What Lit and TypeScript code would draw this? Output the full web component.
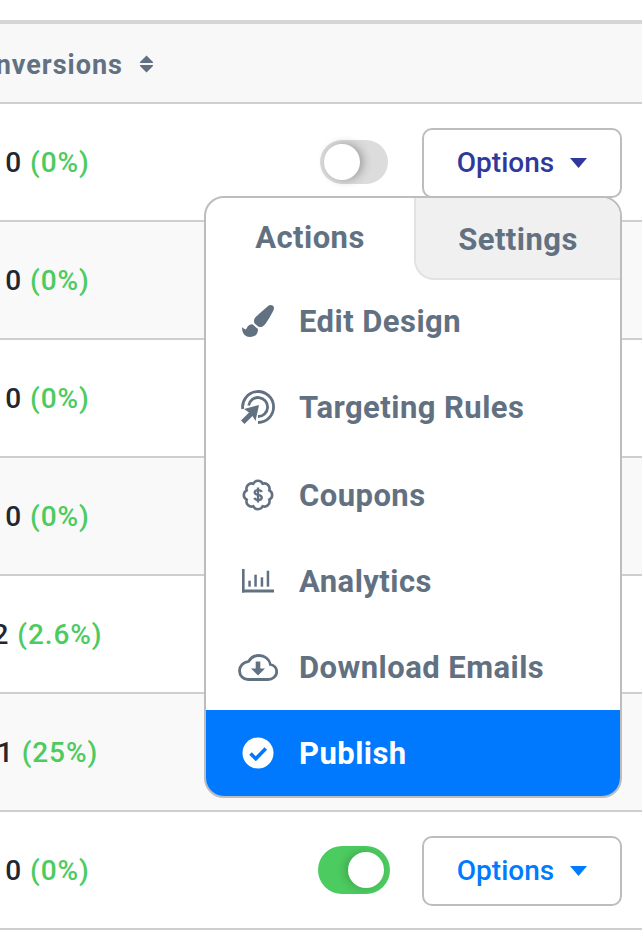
import { LitElement, html, css, svg } from 'lit';
import { customElement, state } from 'lit/decorators.js';

// scalloped outline for the coupon badge, 8 lobes round the middle of a 32 box
const scallop = () => {
  const pts: string[] = [];
  for (let i = 0; i < 8; i++) {
    const a = ((i * 45 + 22.5) * Math.PI) / 180;
    const x = (16 + 12.2 * Math.cos(a)).toFixed(2);
    const y = (16 + 12.2 * Math.sin(a)).toFixed(2);
    pts.push(i === 0 ? `M${x} ${y}` : `A5.2 5.2 0 0 1 ${x} ${y}`);
  }
  return `${pts.join('')}A5.2 5.2 0 0 1 ${pts[0].slice(1)}Z`;
};

const brush = svg`<path d="M167.02 309.34c-40.12 2.58-76.53 17.86-97.19 72.3-2.35 6.21-8 9.98-14.59 9.98-11.11 0-45.46-27.67-55.25-34.35C0 439.62 37.93 512 128 512c75.86 0 128-43.77 128-120.19 0-3.11-.65-6.08-.97-9.13l-88.01-73.34zM457.89 0c-15.16 0-29.37 6.71-40.21 16.45C213.27 199.05 192 203.34 192 257.09c0 13.7 3.25 26.76 8.73 38.7l63.82 53.18c7.21 1.8 14.64 3.03 22.39 3.03 62.11 0 98.11-45.47 211.16-256.46 7.38-14.35 13.9-29.85 13.9-45.99C512 20.64 486 0 457.89 0z" fill="currentColor"/>`;

const target = svg`
  <g fill="none" stroke="currentColor" stroke-width="2.800">
    <path d="M1.700 19A15.500 15.500 0 1 1 17 32.500"/>
    <path d="M7.700 15.500A9.500 9.500 0 1 1 17 26.500"/>
  </g>
  <path d="M18 15L14.500 31 11.500 26 3.500 34 0 30.500 8 22.500 3 19Z" fill="currentColor"/>`;

const coupon = svg`
  <path d=${scallop()} fill="none" stroke="currentColor" stroke-width="2.600"/>
  <path d="M19.800 13c-.5-1.300-1.900-1.900-3.700-1.900-1.900 0-3.500.9-3.500 2.400 0 3.300 7.200 1.600 7.200 5 0 1.600-1.600 2.500-3.700 2.500-1.800 0-3.200-.7-3.800-2.100M16 8.500v15" fill="none" stroke="currentColor" stroke-width="2.300"/>`;

const chart = svg`
  <g fill="currentColor">
    <rect x="0" y="0" width="2.600" height="23.500"/>
    <rect x="0" y="20.500" width="32" height="3"/>
    <rect x="6.300" y="11.700" width="2.500" height="6"/>
    <rect x="12.300" y="5.700" width="2.500" height="12"/>
    <rect x="18.700" y="8.300" width="2.500" height="9.400"/>
    <rect x="24.700" y="1.700" width="2.500" height="16"/>
  </g>`;

const cloud = svg`
  <path d="M10 25.500h20c4.700 0 8.700-3.300 8.700-7.700 0-3.700-2.700-6.600-6.300-7.300C31.400 5.200 26.700 1.500 21 1.500c-4.400 0-8.300 2.300-10.300 5.800C5.300 8 1.500 12 1.500 16.800c0 4.800 3.800 8.700 8.500 8.700z" fill="none" stroke="currentColor" stroke-width="2.800"/>
  <path d="M17.700 7.500h4.600v7h4.700l-7 7-7-7h4.700z" fill="currentColor"/>`;

const check = svg`
  <circle cx="16" cy="16" r="15.500" fill="#fff"/>
  <path d="M8.500 16.500l5.300 5.300L23.800 11.500" fill="none" stroke="#0079ff" stroke-width="3.600"/>`;

const sort = svg`
  <path d="M7.500 0.500 L14 7 Q14.500 8 13.500 8 L1.500 8 Q.5 8 1 7 Z M1.500 10 L13.500 10 Q14.500 10 14 11 L7.500 17.500 L1 11 Q.5 10 1.500 10 Z" fill="currentColor"/>`;

interface Row {
  count: string;
  pct: string;
  shaded: boolean;
  toggle?: 'off' | 'on';
}

const rows: Row[] = [
  { count: '0', pct: '(0%)', shaded: false, toggle: 'off' },
  { count: '0', pct: '(0%)', shaded: true },
  { count: '0', pct: '(0%)', shaded: false },
  { count: '0', pct: '(0%)', shaded: true },
  { count: '2', pct: '(2.6%)', shaded: false },
  { count: '1', pct: '(25%)', shaded: true },
  { count: '0', pct: '(0%)', shaded: false, toggle: 'on' },
];

const actions = [
  { label: 'Edit Design', icon: brush, box: '0 0 512 512', w: 32, h: 32, up: true },
  { label: 'Targeting Rules', icon: target, box: '0 0 34 34', w: 34, h: 34, up: true },
  { label: 'Coupons', icon: coupon, box: '0 0 32 32', w: 32, h: 32, up: false },
  { label: 'Analytics', icon: chart, box: '0 0 32 24', w: 32, h: 24, up: false },
  { label: 'Download Emails', icon: cloud, box: '0 0 40 27', w: 40, h: 27, up: false },
];

@customElement('app-root')
export class AppRoot extends LitElement {
  @state() menuOpen = true;

  static styles = css`
    :host {
      display: block;
      width: 642px;
      height: 930px;
      overflow: hidden;
      background: #fff;
      font-family: Roboto, "Liberation Sans", sans-serif;
      padding-top: 20px;
      box-sizing: border-box;
    }

    .head {
      height: 84px;
      box-sizing: border-box;
      display: flex;
      align-items: center;
      padding-top: 3px;
      background: #f8f8f8;
      border-top: 4px solid #d6d6d6;
      border-bottom: 2px solid #cfcfcf;
    }

    .head-cell {
      width: 154px;
      flex: none;
      display: flex;
      justify-content: flex-end;
      align-items: center;
      gap: 16px;
      color: #627182;
      font-size: 27px;
      font-weight: 700;
      letter-spacing: 1px;
      white-space: nowrap;
    }

    .head-cell svg {
      width: 15px;
      height: 18px;
      flex: none;
      margin-bottom: 2px;
    }

    .row {
      height: 118px;
      box-sizing: border-box;
      display: flex;
      align-items: center;
      justify-content: space-between;
      padding-right: 20px;
      border-bottom: 2px solid #cfcfcf;
      background: #fff;
    }

    .row.shaded {
      background: #f9f9f9;
    }

    .value {
      width: 95px;
      flex: none;
      display: flex;
      justify-content: center;
      gap: 8px;
      font-size: 28px;
      font-weight: 500;
      letter-spacing: 0.9px;
      color: #22262e;
      white-space: nowrap;
    }

    .pct {
      color: #4ccb60;
    }

    .controls {
      position: relative;
      display: flex;
      align-items: center;
      gap: 34px;
    }

    .on-gap {
      gap: 32px;
    }

    .toggle {
      position: relative;
      flex: none;
      width: 68px;
      height: 44px;
      border-radius: 22px;
      background: #dcdcdc;
    }

    .toggle .thumb {
      position: absolute;
      left: 4px;
      top: 4px;
      width: 36px;
      height: 36px;
      border-radius: 50%;
      background: #fff;
      box-shadow: 3px 0 10px rgba(0, 0, 0, 0.3);
    }

    .toggle.on {
      width: 72px;
      height: 48px;
      border-radius: 24px;
      background: #4ccb60;
    }

    .toggle.on .thumb {
      left: 30px;
      top: 6px;
      box-shadow: -3px 0 10px rgba(0, 0, 0, 0.18);
    }

    .options {
      width: 200px;
      height: 70px;
      margin-top: 2px;
      box-sizing: border-box;
      display: flex;
      align-items: center;
      justify-content: center;
      gap: 16px;
      padding: 0 0 2px;
      background: #fff;
      border: 2px solid #bdbdbd;
      border-radius: 10px;
      font-family: inherit;
      font-size: 28px;
      font-weight: 500;
      color: #007bff;
    }

    .options.open {
      color: #30399b;
    }

    .options svg {
      width: 17px;
      height: 10px;
      flex: none;
      margin-top: 2px;
    }

    .menu {
      position: absolute;
      top: 70px;
      right: 0;
      z-index: 10;
      width: 418px;
      box-sizing: border-box;
      background: #fff;
      border: 2px solid #bdbdbd;
      border-radius: 20px;
      overflow: hidden;
    }

    .tabs {
      display: grid;
      grid-template-columns: 208px 206px;
      height: 82px;
      font-size: 31px;
      font-weight: 700;
      letter-spacing: 0.45px;
      color: #627182;
    }

    .tab {
      display: flex;
      align-items: center;
      justify-content: center;
      padding-bottom: 4px;
      box-sizing: border-box;
    }

    .tab.inactive {
      padding: 2px 0 0;
      background: #f0f0f0;
      border-left: 2px solid #e2e2e2;
      border-bottom: 2px solid #e2e2e2;
      border-bottom-left-radius: 20px;
    }

    .item {
      height: 86px;
      display: grid;
      grid-template-columns: 40px 1fr;
      column-gap: 21px;
      align-items: center;
      justify-items: center;
      padding-left: 32px;
      box-sizing: border-box;
      font-size: 31px;
      font-weight: 700;
      letter-spacing: 0.45px;
      color: #627182;
    }

    .item span {
      justify-self: start;
    }

    .item.up {
      padding-bottom: 4px;
    }

    .item.publish {
      background: #0079ff;
      color: #fff;
    }
  `;

  private renderControls(row: Row) {
    const on = row.toggle === 'on';
    const open = !on && this.menuOpen;
    return html`
      <div class="controls ${on ? 'on-gap' : ''}">
        <div class="toggle ${on ? 'on' : ''}"><div class="thumb"></div></div>
        <button class="options ${open ? 'open' : ''}">
          Options
          <svg viewBox="0 0 17 10"><path d="M0 0h17L8.500 10z" fill="currentColor"/></svg>
        </button>
        ${open ? this.renderMenu() : ''}
      </div>
    `;
  }

  private renderMenu() {
    return html`
      <div class="menu">
        <div class="tabs">
          <div class="tab">Actions</div>
          <div class="tab inactive">Settings</div>
        </div>
        ${actions.map(
          (a) => html`
            <div class="item ${a.up ? 'up' : ''}">
              <svg viewBox=${a.box} width=${a.w} height=${a.h}>${a.icon}</svg>
              <span>${a.label}</span>
            </div>
          `
        )}
        <div class="item publish">
          <svg viewBox="0 0 32 32" width="32" height="32">${check}</svg>
          <span>Publish</span>
        </div>
      </div>
    `;
  }

  render() {
    return html`
      <div class="head">
        <div class="head-cell">
          Conversions
          <svg viewBox="0 0 15 18">${sort}</svg>
        </div>
      </div>
      ${rows.map(
        (r) => html`
          <div class="row ${r.shaded ? 'shaded' : ''}">
            <div class="value"><span>${r.count}</span><span class="pct">${r.pct}</span></div>
            ${r.toggle ? this.renderControls(r) : ''}
          </div>
        `
      )}
    `;
  }
}
